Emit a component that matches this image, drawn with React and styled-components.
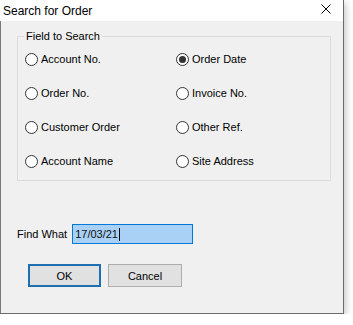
import styled, { createGlobalStyle } from 'styled-components';

const GlobalStyle = createGlobalStyle`
  body {
    margin: 0;
    background: #ffffff;
    font-family: 'Liberation Sans', Arial, sans-serif;
  }
`;

const Window = styled.div`
  width: 342px;
  height: 313px;
  display: flex;
  flex-direction: column;
  background: #f0f0f0;
  border-left: 1px solid #7a7a7a;
  border-right: 1px solid #6b6b6b;
  border-bottom: 1px solid #6b6b6b;
  box-shadow: 2px 3px 7px rgba(0, 0, 0, 0.22);
`;

const TitleBar = styled.div`
  height: 21px;
  flex: none;
  background: #ffffff;
  display: flex;
  align-items: center;
  justify-content: space-between;
  padding: 0 12px 0 3px;
  margin-left: -1px;
  font-size: 12px;
  color: #000;
`;

const Close = styled.span`
  display: flex;
  width: 10px;
  height: 10px;
  margin-top: -4px;
`;

const Body = styled.div`
  flex: 1;
  display: flex;
  flex-direction: column;
  padding: 15px 0 0 16px;
  font-size: 11px;
  color: #000;
`;

const Group = styled.div`
  position: relative;
  box-sizing: border-box;
  width: 314px;
  border: 1px solid #dcdcdc;
  padding: 5px 0 2px 7px;
  display: grid;
  grid-template-columns: 151px 1fr;
  grid-auto-rows: 34px;
`;

const Legend = styled.span`
  position: absolute;
  top: -8px;
  left: 6px;
  padding: 0 2px;
  background: #f0f0f0;
  line-height: 14px;
`;

const Option = styled.label`
  display: flex;
  align-items: center;
  gap: 3px;
`;

const Radio = styled.span`
  width: 11px;
  height: 11px;
  border: 1px solid #333;
  border-radius: 50%;
  background: #fff;
  display: flex;
  align-items: center;
  justify-content: center;

  &::after {
    content: '';
    width: 7px;
    height: 7px;
    border-radius: 50%;
    background: ${(p) => (p.$checked ? '#333' : 'transparent')};
  }
`;

const FindRow = styled.div`
  display: flex;
  align-items: center;
  margin-top: 43px;
  gap: 5px;
  height: 20px;
`;

const Input = styled.div`
  box-sizing: border-box;
  width: 121px;
  height: 20px;
  border: 1px solid #0078d7;
  background: #a9d0f5;
  display: flex;
  align-items: center;
  padding-left: 2px;
  color: #111;

  &::after {
    content: '';
    width: 1px;
    height: 13px;
    background: #000;
    margin-left: 1px;
  }
`;

const Buttons = styled.div`
  display: flex;
  gap: 7px;
  margin: 20px 0 0 11px;
`;

const Button = styled.button`
  box-sizing: border-box;
  width: ${(p) => p.$w}px;
  height: 23px;
  background: #e1e1e1;
  border: ${(p) => (p.$default ? '2px solid #1f6fb0' : '1px solid #adadad')};
  font-family: inherit;
  font-size: 11px;
  color: #000;
  padding: 0;
`;

const options = [
  ['Account No.', false],
  ['Order Date', true],
  ['Order No.', false],
  ['Invoice No.', false],
  ['Customer Order', false],
  ['Other Ref.', false],
  ['Account Name', false],
  ['Site Address', false],
];

export default function App() {
  return (
    <>
      <GlobalStyle />
      <Window>
        <TitleBar>
          <span>Search for Order</span>
          <Close>
            <svg width="10" height="10" viewBox="0 0 10 10">
              <path d="M0.5 0.5L9.5 9.5M9.5 0.5L0.5 9.5" stroke="#000" strokeWidth="1" />
            </svg>
          </Close>
        </TitleBar>
        <Body>
          <Group>
            <Legend>Field to Search</Legend>
            {options.map(([label, checked]) => (
              <Option key={label}>
                <Radio $checked={checked} />
                {label}
              </Option>
            ))}
          </Group>
          <FindRow>
            <span>Find What</span>
            <Input>17/03/21</Input>
          </FindRow>
          <Buttons>
            <Button $default $w={73}>OK</Button>
            <Button $w={74}>Cancel</Button>
          </Buttons>
        </Body>
      </Window>
    </>
  );
}
